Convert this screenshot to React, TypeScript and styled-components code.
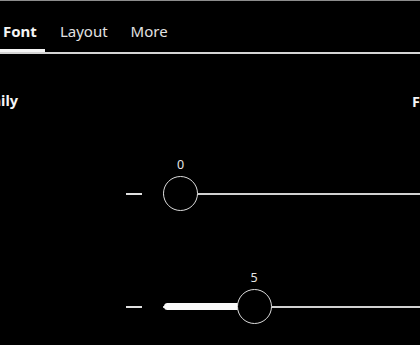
import React from "react";
import styled, { createGlobalStyle } from "styled-components";

const Global = createGlobalStyle`
  html, body {
    margin: 0;
    padding: 0;
    background: #000;
    overflow: hidden;
  }
  body {
    font-family: "Noto Sans", "Open Sans", sans-serif;
    color: #f2f2f2;
  }
`;

const Page = styled.div`
  width: 420px;
  height: 345px;
  overflow: hidden;
  background: #000;
  border-top: 1px solid #8c8c8c;
  box-sizing: border-box;
`;

const TabBar = styled.div`
  display: flex;
  gap: 7px;
  margin-left: -5px;
  border-bottom: 2px solid #d4d4d4;
`;

const Tab = styled.div<{ $active?: boolean }>`
  padding: 20px 8px 8px;
  font-size: 15px;
  line-height: 20px;
  font-weight: ${(p) => (p.$active ? 700 : 400)};
  color: ${(p) => (p.$active ? "#f5f5f5" : "#e2e2e2")};
  border-bottom: 3px solid ${(p) => (p.$active ? "#f5f5f5" : "transparent")};
  white-space: nowrap;
`;

const Headings = styled.div`
  display: grid;
  grid-template-columns: 18px 1fr auto;
  padding-top: 36px;
  width: 480px;
`;

const LeftHeading = styled.div`
  display: flex;
  justify-content: flex-end;
  white-space: nowrap;
`;

const RightHeading = styled.div`
  grid-column: 3;
  width: 68px;
  white-space: nowrap;
`;

const HeadingText = styled.span`
  font-size: 14.5px;
  line-height: 21px;
  font-weight: 700;
  color: #f5f5f5;
`;

const SliderRow = styled.div<{ $top: number }>`
  display: flex;
  align-items: center;
  gap: 21px;
  padding-left: 126px;
  margin-top: ${(p) => p.$top}px;
  height: 35px;
`;

const Minus = styled.div`
  width: 16px;
  height: 2px;
  background: #e0e0e0;
  flex: none;
`;

const Track = styled.div`
  position: relative;
  width: 329px;
  height: 35px;
  flex: none;
`;

const Rail = styled.div`
  position: absolute;
  left: 0;
  right: 0;
  top: 16.5px;
  height: 2px;
  background: #d0d0d0;
`;

const Fill = styled.div`
  position: absolute;
  left: 1px;
  top: 14px;
  height: 7px;
  border-radius: 4px;
  background: #fafafa;
`;

const Thumb = styled.div`
  position: absolute;
  top: 0;
  width: 35px;
  height: 35px;
  box-sizing: border-box;
  border-radius: 50%;
  border: 1.5px solid #dcdcdc;
  background: #000;
`;

const ValueLabel = styled.div`
  position: absolute;
  left: 50%;
  bottom: calc(100% + 5px);
  transform: translateX(-50%);
  font-size: 12.5px;
  line-height: 14px;
  color: #e6e6e6;
`;

const MAX = 20;
const TRACK_W = 329;
const THUMB = 35;

function Slider({ value, top }: { value: number; top: number }) {
  const left = (value / MAX) * (TRACK_W - THUMB);
  return (
    <SliderRow $top={top}>
      <Minus />
      <Track>
        <Rail />
        {value > 0 && <Fill style={{ width: left + THUMB / 2 }} />}
        <Thumb style={{ left }}>
          <ValueLabel>{value}</ValueLabel>
        </Thumb>
      </Track>
    </SliderRow>
  );
}

export default function App() {
  return (
    <>
      <Global />
      <Page>
        <TabBar>
          <Tab $active>Font</Tab>
          <Tab>Layout</Tab>
          <Tab>More</Tab>
        </TabBar>
        <Headings>
          <LeftHeading>
            <HeadingText>Font Family</HeadingText>
          </LeftHeading>
          <RightHeading>
            <HeadingText>Font Size</HeadingText>
          </RightHeading>
        </Headings>
        <Slider value={0} top={64} />
        <Slider value={5} top={78} />
      </Page>
    </>
  );
}
